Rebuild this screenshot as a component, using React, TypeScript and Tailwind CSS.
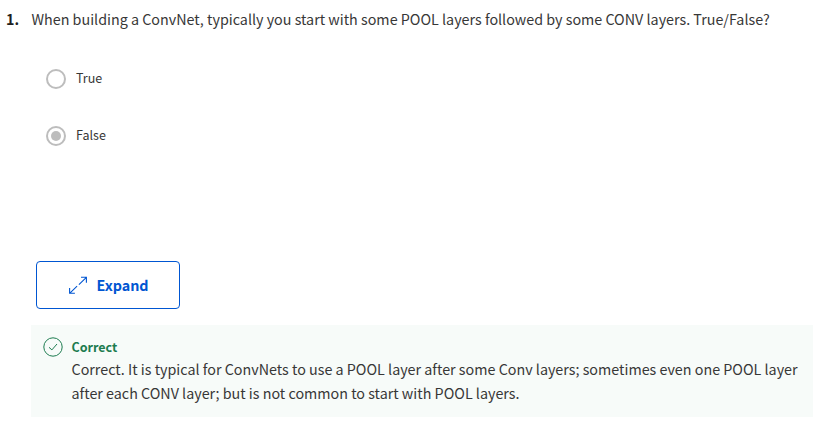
import type { ReactNode } from "react";

function Option({ label, checked = false }: { label: string; checked?: boolean }) {
  return (
    <label className="flex h-5 items-center gap-2.5 text-[12.53px] leading-5">
      <span className="flex size-5 items-center justify-center rounded-full border-2 border-[#bdbdbd]">
        {checked && <span className="size-2.5 rounded-full bg-[#bdbdbd]" />}
      </span>
      <span className="-mt-0.5">{label}</span>
    </label>
  );
}

function Line({ children }: { children: ReactNode }) {
  return <span className="block whitespace-nowrap">{children}</span>;
}

export default function App() {
  return (
    <main className="h-[424px] w-[813px] overflow-hidden bg-white font-['Noto_Sans_CJK_SC','Noto_Sans',sans-serif] text-[#373737]">
      <div className="flex pl-1.5 pt-[7px] text-[14.32px] leading-6 whitespace-nowrap">
        <b className="w-[25.5px] shrink-0 text-[#1f1f1f]">1.</b>
        <span>When building a ConvNet, typically you start with some POOL layers followed by some CONV layers. True/False?</span>
      </div>

      <div className="mt-[38px] flex flex-col gap-[37px] pl-[46px]">
        <Option label="True" />
        <Option label="False" checked />
      </div>

      <button className="ml-9 mt-[115px] flex h-12 w-36 items-center rounded border border-[#0056d2] pl-8 text-[14.32px] leading-6 font-bold text-[#0056d2]">
        <svg className="mr-[9.5px] size-[18px]" viewBox="0 0 18 18" fill="none" stroke="currentColor" strokeWidth="1.1">
          <path d="M12 1.3H17.4V6.7M17.4 1.3L9.9 8.6M5.9 17.3H0.6V12M0.6 17.3L8.1 10.1" />
        </svg>
        Expand
      </button>

      <section className="ml-[31px] mt-4 flex h-[92px] bg-[#f7fbf9] pl-3 pt-3">
        <svg className="mr-[8.5px] size-5 shrink-0 text-[#1d7c50]" viewBox="0 0 20 20" fill="none" stroke="currentColor">
          <circle cx="10" cy="10" r="9.2" />
          <path d="M6 10.3L8.9 12.9L14 7" />
        </svg>
        <div className="text-[14.32px] leading-6">
          <div className="h-5 text-[12.53px] leading-5 font-bold text-[#1d7c50]">Correct</div>
          <Line>Correct. It is typical for ConvNets to use a POOL layer after some Conv layers; sometimes even one POOL layer</Line>
          <Line>after each CONV layer; but is not common to start with POOL layers.</Line>
        </div>
      </section>
    </main>
  );
}
